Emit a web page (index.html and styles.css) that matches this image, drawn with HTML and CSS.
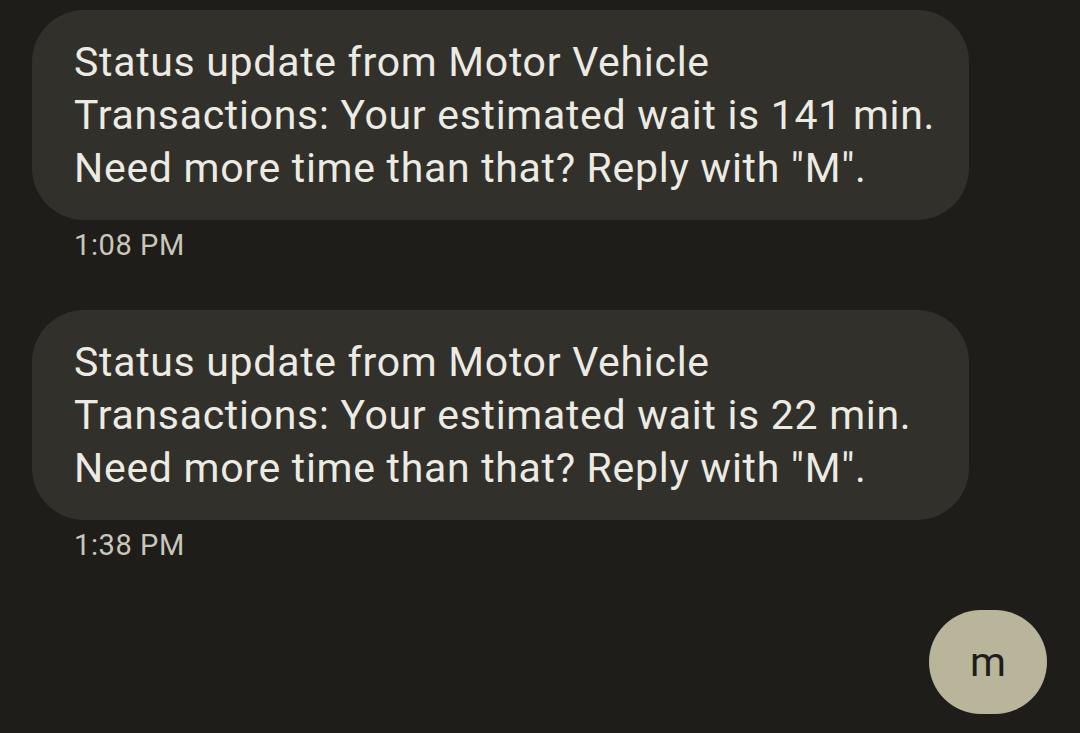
FILE: index.html
```html
<!DOCTYPE html>
<html>
<head>
<meta charset="utf-8">
<link rel="stylesheet" href="styles.css">
</head>
<body>
<main class="thread">
  <div class="msg incoming">
    <div class="bubble">Status update from Motor Vehicle Transactions: Your estimated wait is 141 min. Need more time than that? Reply with "M".</div>
    <div class="time">1:08 PM</div>
  </div>
  <div class="msg incoming">
    <div class="bubble">Status update from Motor Vehicle Transactions: Your estimated wait is 22 min. Need more time than that? Reply with "M".</div>
    <div class="time">1:38 PM</div>
  </div>
  <div class="msg outgoing">
    <div class="bubble sent">m</div>
  </div>
</main>
</body>
</html>
```

FILE: styles.css
```css
html, body {
  margin: 0;
  padding: 0;
  background: #1e1d19;
  height: 100%;
  overflow: hidden;
}
.thread {
  display: flex;
  flex-direction: column;
  padding: 10px 32px 0 32px;
  font-family: Roboto, "Noto Sans", sans-serif;
}
.msg {
  display: flex;
  flex-direction: column;
  align-items: flex-start;
}
.incoming + .incoming {
  margin-top: 48px;
}
.bubble {
  box-sizing: border-box;
  width: 937px;
  background: #31302b;
  color: #ecebe3;
  font-size: 41px;
  line-height: 53px;
  letter-spacing: 0.7px;
  padding: 26px 16px 25px 42px;
  border-radius: 52px;
}
.time {
  color: #c9c7bb;
  font-size: 29px;
  line-height: 34px;
  letter-spacing: 0.6px;
  margin-top: 8px;
  padding-left: 42px;
}
.outgoing {
  align-items: flex-end;
  margin-top: 48px;
}
.bubble.sent {
  width: 118px;
  height: 104px;
  padding: 0;
  display: flex;
  align-items: center;
  justify-content: center;
  background: #b8b59b;
  color: #1e1d19;
  letter-spacing: 0;
  margin-right: 1px;
}
```
